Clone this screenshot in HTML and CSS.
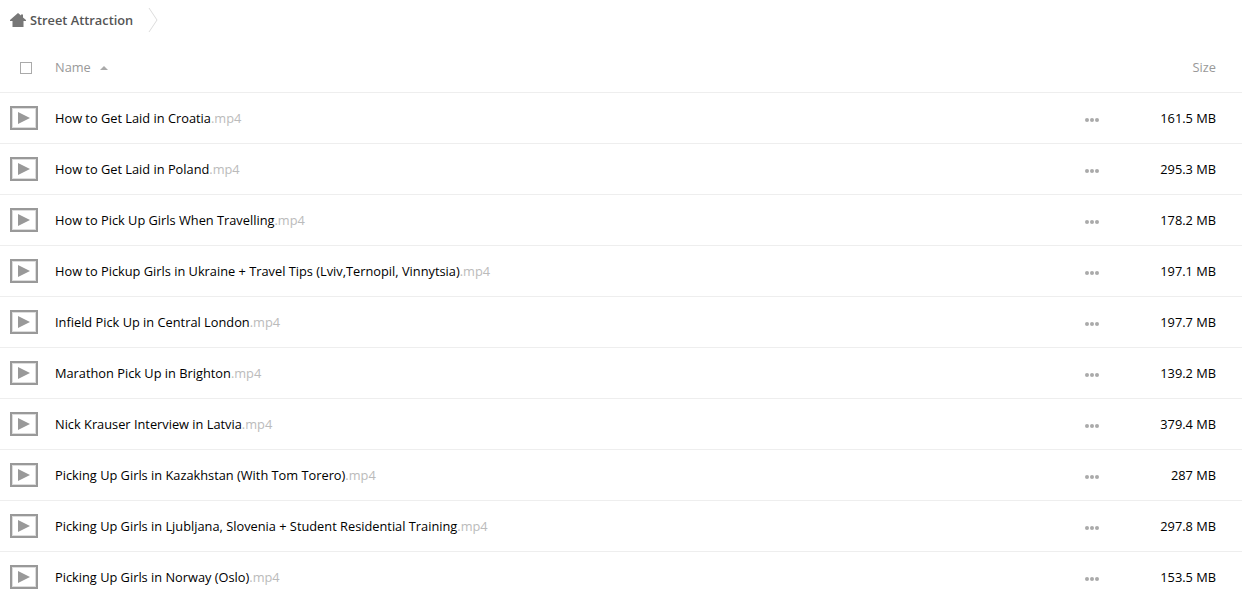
FILE: index.html
```html
<!DOCTYPE html>
<html lang="en">
<head>
    <meta charset="UTF-8">
    <title>Street Attraction</title>
    <link rel="stylesheet" href="styles.css">
</head>
<body>
    <nav class="crumbs">
        <a class="crumb-home">
            <svg class="home-icon" width="16" height="14" viewBox="0 0 16 14"><path d="M8 0 L11 2.6 V1.5 H13 V4.4 L16 7 V8 H13.5 V14 H2.5 V8 H0 V7 Z" fill="#777"/></svg>
            <span>Street Attraction</span>
        </a>
        <svg class="crumb-sep" width="10" height="26" viewBox="0 0 10 26"><path d="M1 1 L9 13 L1 25" fill="none" stroke="#ddd"/></svg>
    </nav>

    <div class="list-head">
        <div class="cell-check"><span class="checkbox"></span></div>
        <div class="cell-name">Name <span class="sort-arrow"></span></div>
        <div class="cell-size">Size</div>
    </div>

    <div class="row">
        <div class="cell-icon"><span class="video-icon"></span></div>
        <div class="cell-name">How to Get Laid in Croatia<span class="ext">.mp4</span></div>
        <div class="cell-more"><span class="dots"><i></i><i></i><i></i></span></div>
        <div class="cell-size">161.5 MB</div>
    </div>
    <div class="row">
        <div class="cell-icon"><span class="video-icon"></span></div>
        <div class="cell-name">How to Get Laid in Poland<span class="ext">.mp4</span></div>
        <div class="cell-more"><span class="dots"><i></i><i></i><i></i></span></div>
        <div class="cell-size">295.3 MB</div>
    </div>
    <div class="row">
        <div class="cell-icon"><span class="video-icon"></span></div>
        <div class="cell-name">How to Pick Up Girls When Travelling<span class="ext">.mp4</span></div>
        <div class="cell-more"><span class="dots"><i></i><i></i><i></i></span></div>
        <div class="cell-size">178.2 MB</div>
    </div>
    <div class="row">
        <div class="cell-icon"><span class="video-icon"></span></div>
        <div class="cell-name">How to Pickup Girls in Ukraine + Travel Tips (Lviv,Ternopil, Vinnytsia)<span class="ext">.mp4</span></div>
        <div class="cell-more"><span class="dots"><i></i><i></i><i></i></span></div>
        <div class="cell-size">197.1 MB</div>
    </div>
    <div class="row">
        <div class="cell-icon"><span class="video-icon"></span></div>
        <div class="cell-name">Infield Pick Up in Central London<span class="ext">.mp4</span></div>
        <div class="cell-more"><span class="dots"><i></i><i></i><i></i></span></div>
        <div class="cell-size">197.7 MB</div>
    </div>
    <div class="row">
        <div class="cell-icon"><span class="video-icon"></span></div>
        <div class="cell-name">Marathon Pick Up in Brighton<span class="ext">.mp4</span></div>
        <div class="cell-more"><span class="dots"><i></i><i></i><i></i></span></div>
        <div class="cell-size">139.2 MB</div>
    </div>
    <div class="row">
        <div class="cell-icon"><span class="video-icon"></span></div>
        <div class="cell-name">Nick Krauser Interview in Latvia<span class="ext">.mp4</span></div>
        <div class="cell-more"><span class="dots"><i></i><i></i><i></i></span></div>
        <div class="cell-size">379.4 MB</div>
    </div>
    <div class="row">
        <div class="cell-icon"><span class="video-icon"></span></div>
        <div class="cell-name">Picking Up Girls in Kazakhstan (With Tom Torero)<span class="ext">.mp4</span></div>
        <div class="cell-more"><span class="dots"><i></i><i></i><i></i></span></div>
        <div class="cell-size">287 MB</div>
    </div>
    <div class="row">
        <div class="cell-icon"><span class="video-icon"></span></div>
        <div class="cell-name">Picking Up Girls in Ljubljana, Slovenia + Student Residential Training<span class="ext">.mp4</span></div>
        <div class="cell-more"><span class="dots"><i></i><i></i><i></i></span></div>
        <div class="cell-size">297.8 MB</div>
    </div>
    <div class="row">
        <div class="cell-icon"><span class="video-icon"></span></div>
        <div class="cell-name">Picking Up Girls in Norway (Oslo)<span class="ext">.mp4</span></div>
        <div class="cell-more"><span class="dots"><i></i><i></i><i></i></span></div>
        <div class="cell-size">153.5 MB</div>
    </div>
</body>
</html>
```

FILE: styles.css
```css
html, body {
    height: 100%;
    overflow: hidden;
}
body {
    margin: 0;
    background: #fff;
    font-family: "Open Sans", sans-serif;
    font-size: 12.8px;
    color: #000;
}
.crumbs {
    display: flex;
    align-items: center;
    height: 40px;
    padding-left: 10px;
}
.crumb-home {
    display: flex;
    align-items: center;
    gap: 4px;
    color: #555;
    font-weight: 600;
}
.crumb-sep {
    margin-left: 15px;
}
.list-head {
    display: flex;
    align-items: center;
    height: 50px;
    padding-top: 2px;
    border-bottom: 1px solid #eee;
    color: #999;
}
.cell-check {
    width: 55px;
    padding-left: 20px;
    box-sizing: border-box;
    display: flex;
}
.checkbox {
    width: 10px;
    height: 10px;
    margin-top: 2px;
    border: 1px solid #aaa;
}
.sort-arrow {
    display: inline-block;
    margin-left: 6px;
    vertical-align: 2px;
    border-left: 4px solid transparent;
    border-right: 4px solid transparent;
    border-bottom: 4px solid #aaa;
}
.list-head .cell-name {
    flex: 1;
}
.cell-size {
    width: 110px;
    padding-right: 26px;
    box-sizing: border-box;
    text-align: right;
}
.row {
    display: flex;
    align-items: center;
    height: 50px;
    border-bottom: 1px solid #eee;
}
.cell-icon {
    width: 55px;
    padding-left: 10px;
    box-sizing: border-box;
    display: flex;
}
.video-icon {
    position: relative;
    display: block;
    width: 24px;
    height: 20px;
    border: 2px solid #999;
    box-shadow: inset 0 0 0 1px #ddd;
}
.video-icon::after {
    content: "";
    position: absolute;
    left: 6px;
    top: 4px;
    border-left: 12px solid #999;
    border-top: 6px solid transparent;
    border-bottom: 6px solid transparent;
}
.row .cell-name {
    flex: 1;
}
.ext {
    color: #bbb;
}
.cell-more {
    width: 47px;
    display: flex;
    padding-top: 4px;
}
.dots {
    display: flex;
    gap: 1px;
}
.dots i {
    display: block;
    width: 4px;
    height: 4px;
    border-radius: 50%;
    background: #aaa;
}
```
